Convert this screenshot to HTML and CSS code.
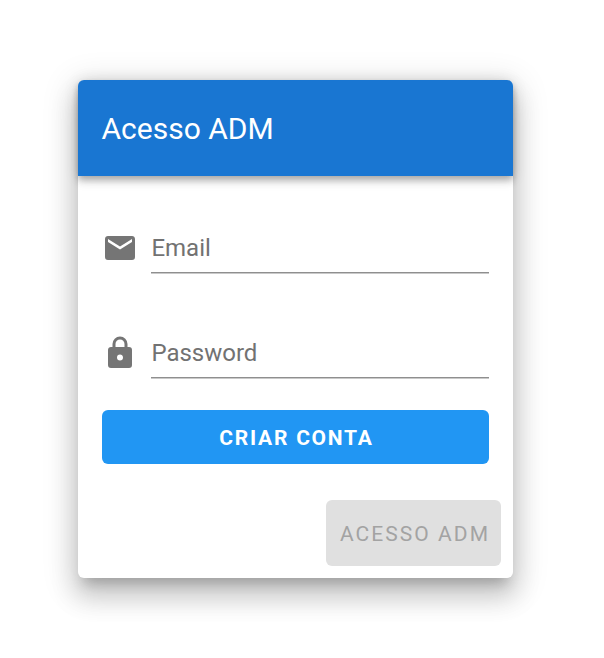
FILE: index.html
```html
<!DOCTYPE html>
<html lang="pt-BR">
<head>
<meta charset="utf-8">
<title>Acesso ADM</title>
<link rel="stylesheet" href="styles.css">
</head>
<body>
<form class="card">
  <header class="toolbar"><h1 class="title">Acesso ADM</h1></header>
  <div class="fields">
    <label class="field">
      <svg class="icon" viewBox="0 0 24 24"><path d="M20,8L12,13L4,8V6L12,11L20,6M20,4H4C2.89,4 2,4.89 2,6V18A2,2 0 0,0 4,20H20A2,2 0 0,0 22,18V6C22,4.89 21.1,4 20,4Z"/></svg>
      <span class="control">Email</span>
    </label>
    <label class="field">
      <svg class="icon" viewBox="0 0 24 24"><path d="M12,17A2,2 0 0,0 14,15C14,13.89 13.1,13 12,13A2,2 0 0,0 10,15A2,2 0 0,0 12,17M18,8A2,2 0 0,1 20,10V20A2,2 0 0,1 18,22H6A2,2 0 0,1 4,20V10C4,8.89 4.9,8 6,8H7V6A5,5 0 0,1 12,1A5,5 0 0,1 17,6V8H18M12,3A3,3 0 0,0 9,6V8H15V6A3,3 0 0,0 12,3Z"/></svg>
      <span class="control">Password</span>
    </label>
    <button class="button primary" type="button">CRIAR CONTA</button>
  </div>
  <footer class="actions"><button class="button disabled" type="button" disabled>ACESSO ADM</button></footer>
</form>
</body>
</html>
```
FILE: styles.css
```css
* { box-sizing: border-box; }
body {
  margin: 0;
  padding: 80px 78px;
  background: #fff;
  font-family: Roboto, sans-serif;
}
.card {
  width: 435px;
  height: 498px;
  border-radius: 6px;
  background: #fff;
  box-shadow: 0 10.5px 12px -6px rgba(0,0,0,.2), 0 18px 25.5px 3px rgba(0,0,0,.14), 0 7.5px 33px 6px rgba(0,0,0,.12);
}
.toolbar {
  display: flex;
  align-items: center;
  height: 96px;
  padding: 0 23.5px;
  border-radius: 6px 6px 0 0;
  color: #fff;
  background: #1976d2;
  box-shadow: 0 3px 6px -1.5px rgba(0,0,0,.2), 0 6px 7.5px rgba(0,0,0,.14), 0 1.5px 15px rgba(0,0,0,.12);
}
.title { margin: 0; font-size: 30px; font-weight: 400; line-height: 45px; }
.fields { display: flex; flex-direction: column; padding: 42px 24px 0; }
.field { display: flex; height: 105px; }
.field + .field { height: 87px; }
.icon { width: 36px; height: 36px; margin: 12px 13px 0 0; fill: #757575; }
.control {
  flex: 1;
  height: 55px;
  padding: 15px 0 0 .4px;
  border-bottom: 1px solid #8f8f8f;
  box-shadow: 0 1px #c9c9c9;
  color: #727272;
  font-size: 24px;
  line-height: 30px;
}
.button {
  border: 0;
  border-radius: 6px;
  font-family: inherit;
  font-size: 21px;
  line-height: 30px;
  white-space: nowrap;
}
.primary {
  height: 54px;
  padding: 2px 0 0 2px;
  color: #fff;
  background: #2196f3;
  font-weight: 700;
  letter-spacing: 1.75px;
}
.actions { display: flex; justify-content: flex-end; padding: 36px 12px 12px; }
.disabled {
  width: 175px;
  height: 66px;
  padding: 2px 0 0 3px;
  color: #a3a3a3;
  background: #e0e0e0;
  font-weight: 400;
  letter-spacing: 2.05px;
}
```
